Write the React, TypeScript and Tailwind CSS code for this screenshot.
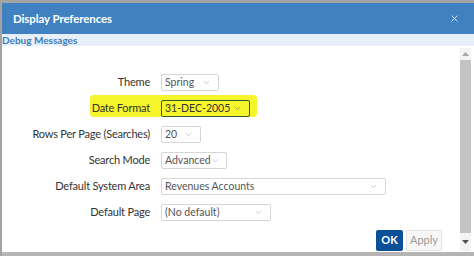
import { ChevronDown, X } from "lucide-react";

const font = { fontFamily: 'Lato, "Noto Sans", sans-serif' };

function Select({ value, width, highlight }: { value: string; width: string; highlight?: boolean }) {
  return (
    <div
      className={`${width} h-[17px] flex items-center justify-between pl-[3px] pr-[7px] rounded-[2px] text-[10.5px] whitespace-nowrap ${
        highlight ? "border border-[#2e5e2a] text-[#333] bg-transparent" : "border border-[#d6d6d6] text-[#555] bg-white"
      }`}
    >
      <span className="leading-none">{value}</span>
      <ChevronDown size={9} strokeWidth={1.4} className={highlight ? "text-[#666]" : "text-[#999]"} />
    </div>
  );
}

const rows = [
  { label: "Theme", value: "Spring", width: "w-[58px]" },
  { label: "Date Format", value: "31-DEC-2005", width: "w-[89px]", highlight: true },
  { label: "Rows Per Page (Searches)", value: "20", width: "w-[40px]" },
  { label: "Search Mode", value: "Advanced", width: "w-[66px]" },
  { label: "Default System Area", value: "Revenues Accounts", width: "w-[225px]" },
  { label: "Default Page", value: "(No default)", width: "w-[110px]" },
];

export default function App() {
  return (
    <div className="w-[474px] h-[256px] bg-[#a3a3a3] pt-[3px] pl-[2px] flex flex-col overflow-hidden" style={font}>
      {/* header */}
      <div className="h-[31px] bg-[#3f81c1] flex items-center justify-between pl-[11px] pr-[14px]">
        <span className="text-white font-bold text-[11.5px] tracking-[-0.1px]">Display Preferences</span>
        <X size={11} strokeWidth={2} className="text-[#dbe8f5]" />
      </div>

      {/* debug bar */}
      <div className="h-[12px] bg-[#e7eff8] flex items-center">
        <span className="text-[10px] font-bold text-[#3f7cc0] leading-none">Debug Messages</span>
      </div>

      {/* body */}
      <div className="flex-1 bg-white flex">
        <div className="flex-1 flex flex-col">
          <div className="flex flex-col pt-[23px]">
            {rows.map((r) => (
              <div key={r.label} className="relative h-[26px] flex items-center">
                {r.highlight && (
                  <div className="absolute left-[88px] top-[0px] w-[167px] h-[22px] bg-[#f6f42a] rounded-[4px]" />
                )}
                <span className="relative w-[148px] text-right text-[11px] text-[#333] tracking-[-0.2px] whitespace-nowrap">
                  {r.label}
                </span>
                <div className="relative ml-[11px]">
                  <Select value={r.value} width={r.width} highlight={r.highlight} />
                </div>
              </div>
            ))}
          </div>
          <div className="flex justify-end gap-[3px] pr-[18px] mt-[5px]">
            <div className="w-[27px] h-[21px] bg-[#0b4f98] rounded-[2px] flex items-center justify-center text-white font-bold text-[11px]">
              OK
            </div>
            <div className="w-[36px] h-[21px] bg-[#f7f7f7] border border-[#e2e2e2] rounded-[2px] flex items-center justify-center text-[#999] text-[11px]">
              Apply
            </div>
          </div>
        </div>

        {/* scrollbar */}
        <div className="w-[11px] mr-[3px] mt-[2px] mb-[1px] bg-[#f3f3f3] flex flex-col items-center">
          <div className="h-[12px] flex items-center justify-center">
            <svg width="7" height="4" viewBox="0 0 7 4"><path d="M0 4 L3.5 0 L7 4Z" fill="#a8a8a8" /></svg>
          </div>
          <div className="flex-1 w-[11px] bg-[#c3c3c3]" />
          <div className="h-[18px] flex items-center justify-center">
            <svg width="7" height="4" viewBox="0 0 7 4"><path d="M0 0 L3.5 4 L7 0Z" fill="#505050" /></svg>
          </div>
        </div>
      </div>

      {/* bottom strip */}
      <div className="h-[4px] bg-[#b5b5b5]" />
    </div>
  );
}
